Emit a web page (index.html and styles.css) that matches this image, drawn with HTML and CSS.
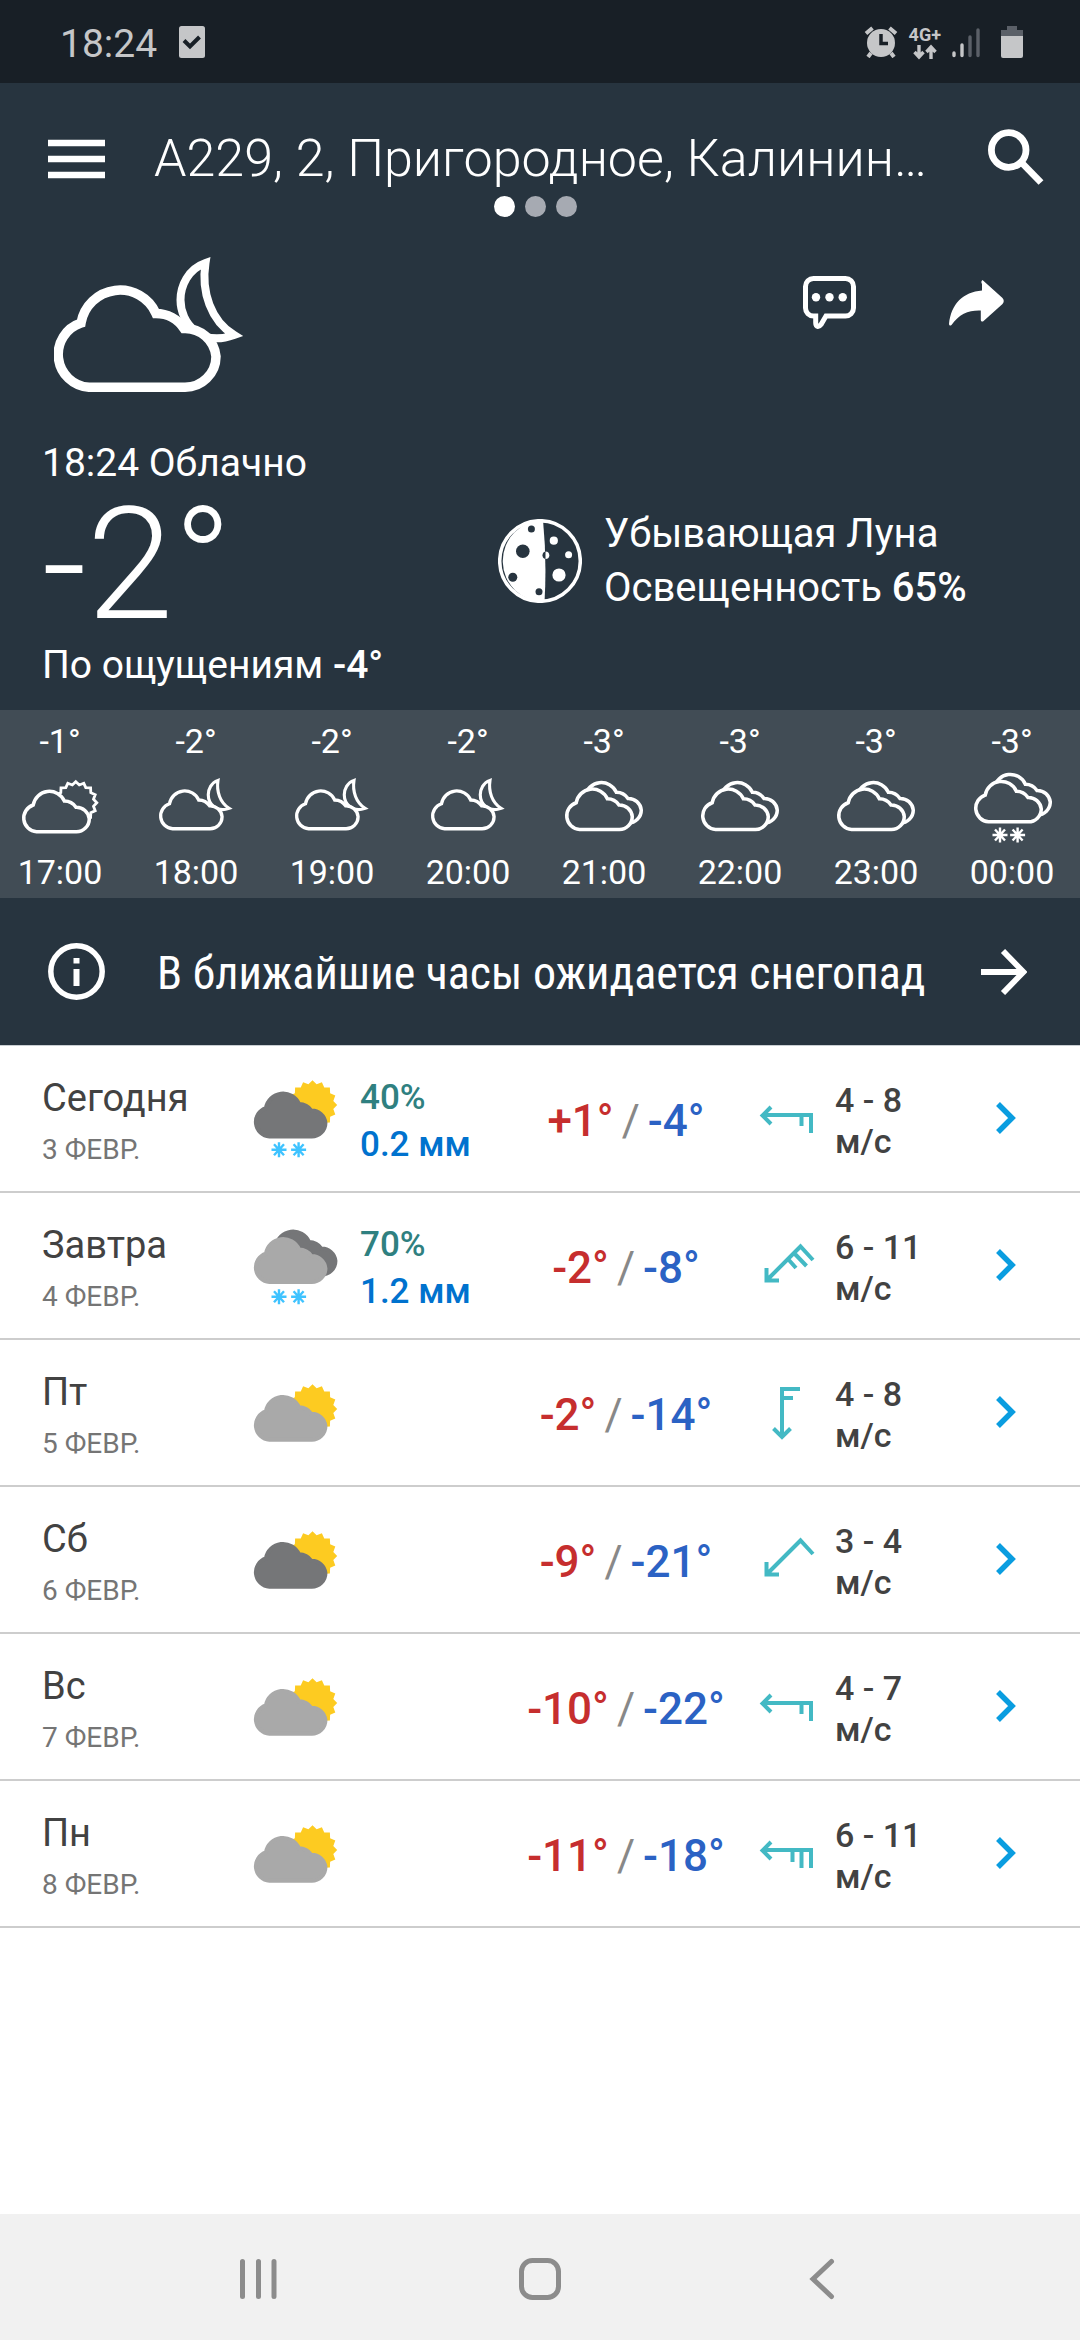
FILE: index.html
```html
<!DOCTYPE html>
<html lang="ru">
<head>
<meta charset="utf-8">
<meta name="viewport" content="width=device-width, initial-scale=1">
<title>Погода</title>
<link rel="stylesheet" href="styles.css">
</head>
<body>

<svg class="sprite" aria-hidden="true">
  <symbol id="cloud" viewBox="0 0 190 136" overflow="visible">
    <path d="M35 130.3H130.500A31 31 0 0 0 162 99.500A31 31 0 0 0 130 71.500A34 34 0 0 0 102 56.500A39.500 39.500 0 0 0 27 66A33 33 0 0 0 35 130.300Z"/>
  </symbol>
  <symbol id="sun" viewBox="-24 -24 48 48" overflow="visible">
    <path d="M0-21L3.500-17.700 8-19.400 10-15 14.800-14.800 15-10 19.400-8 17.700-3.500 21 0 17.700 3.500 19.400 8 15 10 14.800 14.800 10 15 8 19.400 3.500 17.700 0 21-3.500 17.700-8 19.400-10 15-14.800 14.800-15 10-19.400 8-17.700 3.500-21 0-17.700-3.500-19.400-8-15-10-14.800-14.800-10-15-8-19.400-3.500-17.700Z"/>
  </symbol>
  <symbol id="flake" viewBox="-8 -8 16 16" overflow="visible">
    <path d="M0-7.500V7.500M-7.500 0H7.500M-5-5.500L5 5.500M5-5.500L-5 5.500"/>
  </symbol>
  <symbol id="night" viewBox="0 0 190 136" overflow="visible">
    <path class="moon" d="M151.500 6C134 12 126.500 29 126.500 43C126.500 66 147 90 180 78C157 64 147 35 151.500 6Z"/>
    <use href="#cloud" width="190" height="136"/>
  </symbol>

  <symbol id="hour-sun" viewBox="0 0 80 89">
    <use class="thin" href="#sun" x="31.800" y="16.700" width="48" height="48"/>
    <use href="#cloud" x="2" y="15.600" width="78.900" height="56.500"/>
  </symbol>
  <symbol id="hour-night" viewBox="0 0 80 89">
    <use href="#night" x="3" y="16" width="74" height="53"/>
  </symbol>
  <symbol id="hour-overcast" viewBox="0 0 80 89">
    <use href="#cloud" x="10" y="6.800" width="78.900" height="56.500"/>
    <use href="#cloud" x="1" y="13.300" width="78.900" height="56.500"/>
  </symbol>
  <symbol id="hour-snow" viewBox="0 0 80 89">
    <use href="#cloud" x="11" y="-1.300" width="78.900" height="56.500"/>
    <use href="#cloud" x="2" y="5.700" width="78.900" height="56.500"/>
    <use class="flake" href="#flake" x="20" y="65" width="16" height="16"/>
    <use class="flake" href="#flake" x="37.600" y="65" width="16" height="16"/>
  </symbol>

  <symbol id="day-sun-snow" viewBox="0 0 86 80">
    <use class="sun" href="#sun" x="31.300" y="-2.200" width="56.400" height="56.400"/>
    <use class="cloud-dark" href="#cloud" x="1" y="0" width="83.800" height="60"/>
    <use class="flake" href="#flake" x="18" y="62.700" width="16" height="16"/>
    <use class="flake" href="#flake" x="37.600" y="62.700" width="16" height="16"/>
  </symbol>
  <symbol id="day-overcast-snow" viewBox="0 0 86 80">
    <use class="cloud-dark" href="#cloud" x="11" y="-9" width="83.800" height="60"/>
    <use class="cloud-light" href="#cloud" x="1" y="-1.500" width="83.800" height="60"/>
    <use class="flake" href="#flake" x="18" y="62.700" width="16" height="16"/>
    <use class="flake" href="#flake" x="37.600" y="62.700" width="16" height="16"/>
  </symbol>
  <symbol id="day-sun-light" viewBox="0 0 86 58">
    <use class="sun" href="#sun" x="31.300" y="-3.200" width="56.400" height="56.400"/>
    <use class="cloud-light" href="#cloud" x="1" y="-1.700" width="83.800" height="60"/>
  </symbol>
  <symbol id="day-sun-dark" viewBox="0 0 86 58">
    <use class="sun" href="#sun" x="31.300" y="-3.200" width="56.400" height="56.400"/>
    <use class="cloud-dark" href="#cloud" x="1" y="-1.700" width="83.800" height="60"/>
  </symbol>

  <symbol id="wind-e" viewBox="0 0 58 58"><path d="M5 25H53V43M43.500 25V36M13 17L4.500 25.500L13 34"/></symbol>
  <symbol id="wind-e-strong" viewBox="0 0 58 58"><path d="M5 25H53V43M43.500 25V43M34.500 25V37M13 17L4.500 25.500L13 34"/></symbol>
  <symbol id="wind-ne" viewBox="0 0 58 58"><path d="M9 43L42.500 9.500L55 23M8.500 31V43.500H21"/></symbol>
  <symbol id="wind-ne-strong" viewBox="0 0 58 58"><path d="M9 43L42.500 9.500L55 23M36 16L48.500 29M30 22L38 31M8.500 31V43.500H21"/></symbol>
  <symbol id="wind-n" viewBox="0 0 58 58"><path d="M24 53V5H42M24 14H35M15.500 44.500L24 53L32.500 44.500"/></symbol>
  <symbol id="chevron" viewBox="0 0 38 38"><path d="M11 4L25 18L11 32"/></symbol>
</svg>

<div class="status">
  <time class="status-time">18:24</time>
  <svg class="status-check" viewBox="0 0 26 32" width="26" height="32"><rect width="26" height="32" rx="2.500" fill="#c5c6c8"/><path d="M5 14.500L11 20.500L20.500 11" fill="none" stroke="#181f26" stroke-width="4"/></svg>
  <div class="status-icons">
    <svg viewBox="0 0 34 32" width="34" height="32"><g fill="none" stroke="#c5c6c8"><path d="M2 7.500L8.500 2M32 7.500L25.500 2" stroke-width="4"/><path d="M7 27L4 31M27 27L30 31" stroke-width="4"/></g><circle cx="17" cy="17" r="14" fill="#c5c6c8"/><path d="M17 8V17.500H24" fill="none" stroke="#181f26" stroke-width="3.500"/></svg>
    <div class="network"><span>4G+</span>
      <svg viewBox="0 0 24 16" width="24" height="16" fill="none" stroke="#c5c6c8" stroke-width="3.400"><path d="M6 1V13M1.500 8L6 13L10.500 8M18 15V3M13.500 8L18 3L22.500 8"/></svg>
    </div>
    <svg viewBox="0 0 28 32" width="28" height="32" stroke-width="3.400" stroke-linecap="round"><path d="M2 27V29.500M10 19V29.500" stroke="#c5c6c8"/><path d="M18 11V29.500M26 4V29.500" stroke="#5b6068"/></svg>
    <svg class="battery" viewBox="0 0 22 33" width="22" height="33"><path d="M6 1H16V5H22V12H0V5H6Z" fill="#5b6068"/><path d="M0 11H22V31Q22 33 20 33H2Q0 33 0 31Z" fill="#c5c6c8"/></svg>
  </div>
</div>

<header class="top">
  <div class="bar">
    <button class="icon-btn" type="button" aria-label="Меню"><svg viewBox="0 0 57 40" width="57" height="40"><path d="M0 4H57M0 20H57M0 36H57" stroke="#fff" stroke-width="6.500"/></svg></button>
    <h1>A229, 2, Пригородное, Калинин…</h1>
    <button class="icon-btn search" type="button" aria-label="Поиск"><svg viewBox="0 0 56 56" width="56" height="56" fill="none" stroke="#fff" stroke-width="6.800"><circle cx="20.700" cy="21" r="17.300"/><path d="M33 33L53 53.500"/></svg></button>
  </div>
  <div class="dots"><span class="on"></span><span></span><span></span></div>
</header>

<main>
  <section class="now">
    <div class="now-top">
      <svg class="outline" viewBox="0 0 190 136" width="190" height="136"><use href="#night" width="190" height="136"/></svg>
      <div class="actions">
        <button class="icon-btn" type="button" aria-label="Сообщить"><svg viewBox="0 0 53 53" width="53" height="53"><path d="M12.700 40H10.500A8 8 0 0 1 2.500 32V10.500A8 8 0 0 1 10.500 2.500H42.500A8 8 0 0 1 50.500 10.500V32A8 8 0 0 1 42.500 40H23L18 48.500Q16.500 50.500 15 50.500Q12.700 50 12.700 47Z" fill="none" stroke="#fff" stroke-width="5"/><g fill="#fff"><circle cx="13" cy="21.300" r="4.200"/><circle cx="26.500" cy="21.300" r="4.200"/><circle cx="39.700" cy="21.300" r="4.200"/></g></svg></button>
        <button class="icon-btn" type="button" aria-label="Поделиться"><svg viewBox="0 0 55 46" width="55" height="46"><path d="M33.500 0L53.500 18Q56 21 53.500 24L34 41.500Q31.800 42 31.800 40V30.500C20 30 10 34 2.500 45Q.3 46.500 0 44C2 24 14 12 33 10.500V4Q31.500 1.500 33.500 0Z" fill="#fff"/></svg></button>
      </div>
    </div>
    <p class="line condition">18:24 Облачно</p>
    <div class="now-main">
      <p class="temp">-2°</p>
      <div class="moon-info">
        <svg viewBox="0 0 84 84" width="84" height="84">
          <circle cx="42" cy="42" r="40.300" fill="none" stroke="#fff" stroke-width="3.500"/>
          <path d="M45 1A41 41 0 1 0 46.500 83Q49 42 45 1Z" fill="#fff"/>
          <g fill="#27343f"><circle cx="33.400" cy="10" r="3.500"/><circle cx="24.800" cy="32.300" r="6.800"/><circle cx="14.800" cy="58.300" r="4.500"/><circle cx="41" cy="72.700" r="3.500"/><path d="M48.300 32.500A3.800 3.800 0 0 0 48.300 40.100Z"/></g>
          <g fill="#fff"><circle cx="55.800" cy="21.700" r="4.100"/><circle cx="70.600" cy="35.700" r="3.500"/><circle cx="61" cy="56" r="6.600"/><path d="M47.500 32.500A3.800 3.800 0 0 1 47.500 40.100Z"/></g>
        </svg>
        <p>Убывающая Луна<br>Освещенность <b>65%</b></p>
      </div>
    </div>
    <p class="line">По ощущениям <b>-4°</b></p>
  </section>

  <ol class="hours">
    <li><span>-1°</span><svg viewBox="0 0 80 89"><use href="#hour-sun"/></svg><time>17:00</time></li>
    <li><span>-2°</span><svg viewBox="0 0 80 89"><use href="#hour-night"/></svg><time>18:00</time></li>
    <li><span>-2°</span><svg viewBox="0 0 80 89"><use href="#hour-night"/></svg><time>19:00</time></li>
    <li><span>-2°</span><svg viewBox="0 0 80 89"><use href="#hour-night"/></svg><time>20:00</time></li>
    <li><span>-3°</span><svg viewBox="0 0 80 89"><use href="#hour-overcast"/></svg><time>21:00</time></li>
    <li><span>-3°</span><svg viewBox="0 0 80 89"><use href="#hour-overcast"/></svg><time>22:00</time></li>
    <li><span>-3°</span><svg viewBox="0 0 80 89"><use href="#hour-overcast"/></svg><time>23:00</time></li>
    <li><span>-3°</span><svg viewBox="0 0 80 89"><use href="#hour-snow"/></svg><time>00:00</time></li>
  </ol>

  <a class="alert" href="#nowcast">
    <svg viewBox="0 0 57 57" width="57" height="57"><circle cx="28.500" cy="28.500" r="25.700" fill="none" stroke="#fff" stroke-width="5.500"/><path d="M25.500 15H31.500V20.500H25.500ZM25.500 26H31.500V43H25.500Z" fill="#fff"/></svg>
    <span>В ближайшие часы ожидается снегопад</span>
    <svg viewBox="0 0 46 46" width="46" height="46" fill="none" stroke="#fff" stroke-width="5.800"><path d="M0 23H42M22 2L42.500 23L22 44"/></svg>
  </a>

  <ul class="days">
    <li><a href="#d3">
      <div class="day">Сегодня<small>3 ФЕВР.</small></div>
      <svg class="day-icon" viewBox="0 0 86 80" width="86" height="80"><use href="#day-sun-snow"/></svg>
      <div class="rain"><span>40%</span><b>0.2 мм</b></div>
      <div class="range"><span class="hi">+1°</span><span>/</span><span class="lo">-4°</span></div>
      <svg class="wind-icon" viewBox="0 0 58 58"><use href="#wind-e"/></svg>
      <div class="wind">4 - 8<br>м/с</div>
      <svg class="chev" viewBox="0 0 38 38"><use href="#chevron"/></svg>
    </a></li>
    <li><a href="#d4">
      <div class="day">Завтра<small>4 ФЕВР.</small></div>
      <svg class="day-icon" viewBox="0 0 86 80" width="86" height="80"><use href="#day-overcast-snow"/></svg>
      <div class="rain"><span>70%</span><b>1.2 мм</b></div>
      <div class="range"><span class="hi">-2°</span><span>/</span><span class="lo">-8°</span></div>
      <svg class="wind-icon" viewBox="0 0 58 58"><use href="#wind-ne-strong"/></svg>
      <div class="wind">6 - 11<br>м/с</div>
      <svg class="chev" viewBox="0 0 38 38"><use href="#chevron"/></svg>
    </a></li>
    <li><a href="#d5">
      <div class="day">Пт<small>5 ФЕВР.</small></div>
      <svg class="day-icon" viewBox="0 0 86 58" width="86" height="58"><use href="#day-sun-light"/></svg>
      <div class="rain"></div>
      <div class="range"><span class="hi">-2°</span><span>/</span><span class="lo">-14°</span></div>
      <svg class="wind-icon" viewBox="0 0 58 58"><use href="#wind-n"/></svg>
      <div class="wind">4 - 8<br>м/с</div>
      <svg class="chev" viewBox="0 0 38 38"><use href="#chevron"/></svg>
    </a></li>
    <li><a href="#d6">
      <div class="day">Сб<small>6 ФЕВР.</small></div>
      <svg class="day-icon" viewBox="0 0 86 58" width="86" height="58"><use href="#day-sun-dark"/></svg>
      <div class="rain"></div>
      <div class="range"><span class="hi">-9°</span><span>/</span><span class="lo">-21°</span></div>
      <svg class="wind-icon" viewBox="0 0 58 58"><use href="#wind-ne"/></svg>
      <div class="wind">3 - 4<br>м/с</div>
      <svg class="chev" viewBox="0 0 38 38"><use href="#chevron"/></svg>
    </a></li>
    <li><a href="#d7">
      <div class="day">Вс<small>7 ФЕВР.</small></div>
      <svg class="day-icon" viewBox="0 0 86 58" width="86" height="58"><use href="#day-sun-light"/></svg>
      <div class="rain"></div>
      <div class="range"><span class="hi">-10°</span><span>/</span><span class="lo">-22°</span></div>
      <svg class="wind-icon" viewBox="0 0 58 58"><use href="#wind-e"/></svg>
      <div class="wind">4 - 7<br>м/с</div>
      <svg class="chev" viewBox="0 0 38 38"><use href="#chevron"/></svg>
    </a></li>
    <li><a href="#d8">
      <div class="day">Пн<small>8 ФЕВР.</small></div>
      <svg class="day-icon" viewBox="0 0 86 58" width="86" height="58"><use href="#day-sun-light"/></svg>
      <div class="rain"></div>
      <div class="range"><span class="hi">-11°</span><span>/</span><span class="lo">-18°</span></div>
      <svg class="wind-icon" viewBox="0 0 58 58"><use href="#wind-e-strong"/></svg>
      <div class="wind">6 - 11<br>м/с</div>
      <svg class="chev" viewBox="0 0 38 38"><use href="#chevron"/></svg>
    </a></li>
  </ul>
</main>

<nav class="system-nav">
  <button class="icon-btn" type="button" aria-label="Недавние"><svg viewBox="0 0 44 44" width="44" height="44"><path d="M5.500 4.500V39.500M21.500 4.500V39.500M37 4.500V39.500"/></svg></button>
  <button class="icon-btn" type="button" aria-label="Домой"><svg viewBox="0 0 44 44" width="44" height="44"><rect x="3.500" y="3.500" width="37" height="37" rx="11"/></svg></button>
  <button class="icon-btn" type="button" aria-label="Назад"><svg viewBox="0 0 44 44" width="44" height="44"><path d="M32.500 4.500L14 22L32.500 39.500"/></svg></button>
</nav>

</body>
</html>
```
FILE: styles.css
```css
:root {
  --bg: #27343f;
  --strip: #414c55;
  --text: #424242;
}

* { box-sizing: border-box; }

body {
  margin: 0;
  min-height: 100vh;
  display: flex;
  flex-direction: column;
  background: #fff;
  color: #fff;
  font-family: Roboto, "Noto Sans", sans-serif;
}

h1, p, ul, ol { margin: 0; padding: 0; }
ul, ol { list-style: none; }
a { color: inherit; text-decoration: none; }
b { font-weight: 500; }
svg { display: block; flex: none; }

.sprite { position: absolute; width: 0; height: 0; }

.icon-btn {
  padding: 0;
  border: 0;
  background: none;
  cursor: pointer;
}

/* System status bar */
.status {
  display: flex;
  align-items: center;
  height: 83px;
  padding: 0 57px 0 60px;
  background: #181f26;
  color: #c5c6c8;
}
.status-time { font-size: 39px; line-height: 46px; padding-top: 4px; }
.status-check { margin-left: 22px; }
.status-icons {
  display: flex;
  align-items: center;
  gap: 11px;
  margin-left: auto;
}
.network {
  display: flex;
  flex-direction: column;
  align-items: center;
  padding-top: 2px;
  font-size: 18px;
  font-weight: 700;
  line-height: 18px;
}
.battery { margin-left: 10px; }

/* Title bar */
.top { padding: 46px 36px 0 48px; background: var(--bg); }
.bar { display: flex; align-items: center; }
.bar h1 {
  flex: 1;
  min-width: 0;
  margin: 0 40px 0 49px;
  overflow: hidden;
  white-space: nowrap;
  font-size: 52px;
  font-weight: 300;
  line-height: 60px;
}
.search { align-self: flex-start; }
.dots { display: flex; justify-content: center; gap: 10px; padding: 7px 21px 0 0; }
.dots span { width: 21px; height: 21px; border-radius: 50%; background: #a6aab2; }
.dots .on { background: #fff; }

/* Current weather */
.now { padding: 40px 42px 21px; background: var(--bg); }
.now-top {
  display: flex;
  justify-content: space-between;
  align-items: flex-start;
  padding: 0 34px 0 12px;
}
.actions { display: flex; align-items: center; gap: 93px; padding-top: 19px; }
.line { font-size: 39px; line-height: 48px; }
.condition { margin-top: 46px; }
.now-main {
  display: grid;
  grid-template-columns: 456fr 540fr;
  align-items: start;
  margin-top: 2px;
}
.temp { font-size: 156px; font-weight: 300; line-height: 152px; }
.moon-info {
  display: flex;
  align-items: center;
  gap: 22px;
  padding-top: 18px;
  font-size: 40px;
  line-height: 54px;
}

.outline, .hours svg {
  fill: var(--bg);
  stroke: #fff;
  stroke-width: 9.500px;
  stroke-miterlimit: 8;
}
.moon { stroke-width: 8px; }

/* Hourly strip */
.hours {
  display: grid;
  grid-template-columns: repeat(8, 1fr);
  padding: 10px 0 5px;
  margin-left: -8px;
  background: var(--strip);
  font-size: 34px;
  line-height: 42px;
}
.hours li { display: flex; flex-direction: column; align-items: center; }
.hours svg { width: 80px; height: 89px; fill: var(--strip); stroke-width: 8.500px; }
.thin { stroke-width: 2.800px; }
.flake { stroke: currentColor; stroke-width: 2.400px; }

/* Nowcast banner */
.alert {
  display: flex;
  align-items: center;
  height: 147px;
  padding: 0 53px 0 48px;
  background: var(--bg);
  font-family: "Roboto Condensed", Roboto, sans-serif;
  font-size: 46px;
  line-height: 54px;
}
.alert span { flex: 1; margin-left: 52px; padding-top: 2px; white-space: nowrap; }

/* Daily forecast */
.days { border-top: 1px solid #c9ced2; color: var(--text); }
.days li { border-bottom: 2px solid #cdcdcd; }
.days a {
  display: grid;
  grid-template-columns: 211px 107px 150px 1fr 93px 152px 51px;
  align-items: center;
  min-height: 145px;
  padding: 0 42px;
}
.day { padding-top: 2px; font-size: 38px; line-height: 52px; }
.day small {
  display: block;
  margin-top: 9px;
  color: #757575;
  font-size: 28px;
  line-height: 34px;
}
.day-icon { color: #3fc3ff; }
.sun { fill: #fdcb21; }
.cloud-dark { fill: #757678; stroke: #757678; stroke-width: 9px; }
.cloud-light { fill: #a9a9a9; stroke: #a9a9a9; stroke-width: 9px; }
.rain {
  display: flex;
  flex-direction: column;
  padding-top: 4px;
  font-size: 35px;
  font-weight: 500;
  line-height: 47px;
  color: #2f8080;
}
.rain b { color: #0072ce; }
.range {
  display: flex;
  justify-content: center;
  gap: 8px;
  padding-top: 4px;
  color: #888;
  font-size: 44px;
  line-height: 56px;
}
.range .hi { color: #c62e2e; font-weight: 500; }
.range .lo { color: #2b62c4; font-weight: 500; }
.wind-icon {
  width: 58px;
  height: 58px;
  margin-left: 16px;
  fill: none;
  stroke: #43b9c4;
  stroke-width: 4px;
}
.wind {
  padding-top: 4px;
  font-size: 34px;
  font-weight: 500;
  line-height: 41px;
}
.chev {
  width: 38px;
  height: 38px;
  fill: none;
  stroke: #0a9de0;
  stroke-width: 5.500px;
}

/* System navigation */
.system-nav {
  display: grid;
  grid-template-columns: repeat(3, 1fr);
  justify-items: center;
  align-items: center;
  height: 126px;
  margin-top: auto;
  padding: 4px 11% 0;
  background: #f1f1f1;
}
.system-nav svg {
  fill: none;
  stroke: #8c8c8c;
  stroke-width: 5px;
  stroke-linecap: round;
}
```
